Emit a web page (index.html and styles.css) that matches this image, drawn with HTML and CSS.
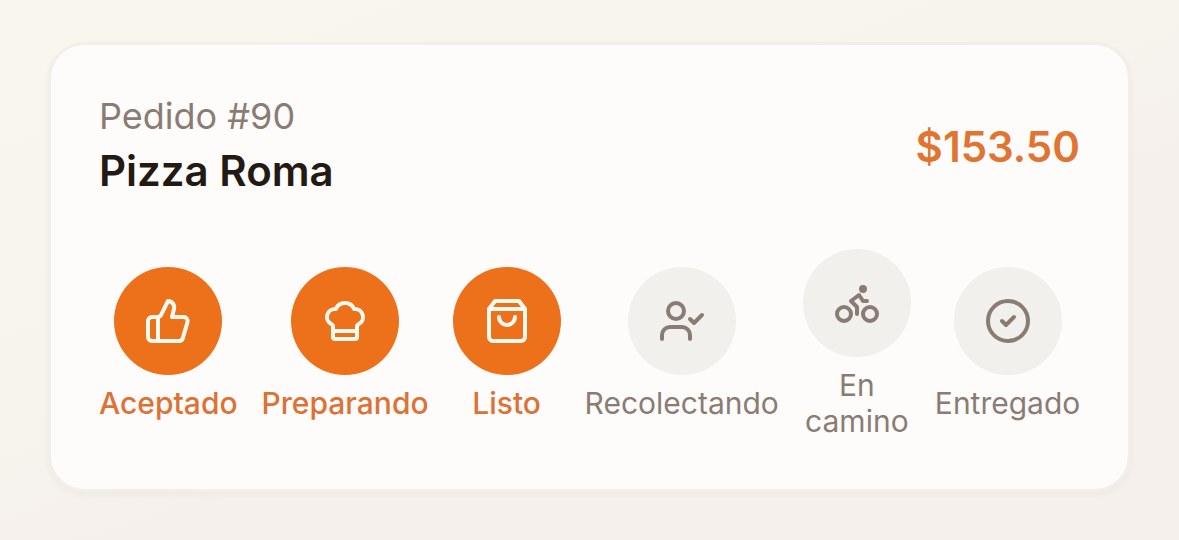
FILE: index.html
```html
<!DOCTYPE html>
<html lang="es">
<head>
<meta charset="utf-8">
<meta name="viewport" content="width=device-width, initial-scale=1">
<title>Pedido #90</title>
<link rel="stylesheet" href="styles.css">
</head>
<body>
<main class="page">
  <article class="card">
    <header class="card-header">
      <div>
        <p class="order-number">Pedido #90</p>
        <h1 class="store-name">Pizza Roma</h1>
      </div>
      <p class="total">$153.50</p>
    </header>
    <ol class="steps">
      <li class="step step-done">
        <span class="step-icon"><svg class="icon" viewBox="0 0 24 24" aria-hidden="true"><path d="M7 10v12"/><path d="M15 5.88 14 10h5.83a2 2 0 0 1 1.92 2.56l-2.33 8A2 2 0 0 1 17.5 22H4a2 2 0 0 1-2-2v-8a2 2 0 0 1 2-2h2.76a2 2 0 0 0 1.79-1.11L12 2a3.13 3.13 0 0 1 3 3.88Z"/></svg></span>
        <span class="step-label">Aceptado</span>
      </li>
      <li class="step step-done">
        <span class="step-icon"><svg class="icon" viewBox="0 0 24 24" aria-hidden="true"><path d="M17 21a1 1 0 0 0 1-1v-5.35c0-.457.316-.844.727-1.041a4 4 0 0 0-2.134-7.589 5 5 0 0 0-9.186 0 4 4 0 0 0-2.134 7.588c.411.198.727.585.727 1.041V20a1 1 0 0 0 1 1Z"/><path d="M6 17h12"/></svg></span>
        <span class="step-label">Preparando</span>
      </li>
      <li class="step step-done">
        <span class="step-icon"><svg class="icon" viewBox="0 0 24 24" aria-hidden="true"><path d="M6 2 3 6v14a2 2 0 0 0 2 2h14a2 2 0 0 0 2-2V6l-3-4Z"/><path d="M3 6h18"/><path d="M16 10a4 4 0 0 1-8 0"/></svg></span>
        <span class="step-label">Listo</span>
      </li>
      <li class="step">
        <span class="step-icon"><svg class="icon" viewBox="0 0 24 24" aria-hidden="true"><path d="M16 21v-2a4 4 0 0 0-4-4H6a4 4 0 0 0-4 4v2"/><circle cx="9" cy="7" r="4"/><path d="m16 11 2 2 4-4"/></svg></span>
        <span class="step-label">Recolectando</span>
      </li>
      <li class="step">
        <span class="step-icon"><svg class="icon" viewBox="0 0 24 24" aria-hidden="true"><circle cx="18.5" cy="17.5" r="3.5"/><circle cx="5.5" cy="17.5" r="3.5"/><circle cx="15" cy="5" r="1"/><path d="M12 17.5V14l-3-3 4-3 2 3h2"/></svg></span>
        <span class="step-label">En camino</span>
      </li>
      <li class="step">
        <span class="step-icon"><svg class="icon" viewBox="0 0 24 24" aria-hidden="true"><circle cx="12" cy="12" r="10"/><path d="m9 12 2 2 4-4"/></svg></span>
        <span class="step-label">Entregado</span>
      </li>
    </ol>
  </article>
</main>
</body>
</html>
```
FILE: styles.css
```css
* {
  box-sizing: border-box;
}

body {
  margin: 0;
  min-height: 100vh;
  background: linear-gradient(160deg, #f9f6ee 0%, #f7f4ed 40%, #f5f0ec 60%, #f5f0ec 100%);
  color: #231a13;
  font-family: Inter, "Liberation Sans", sans-serif;
}

.page {
  padding: 42px 48px;
}

.card {
  padding: 48px;
  border: 3px solid #f3eeea;
  border-radius: 36px;
  background: #fefcfa;
  background-clip: padding-box;
  box-shadow: 0 3px 6px rgba(60, 45, 30, 0.04);
}

.card-header {
  display: flex;
  align-items: center;
  justify-content: space-between;
  margin-bottom: 48px;
}

.order-number,
.store-name,
.total {
  margin: 0;
}

.order-number {
  margin-bottom: 2px;
  color: #8a7c75;
  font-size: 36px;
  line-height: 46px;
}

.store-name {
  font-size: 42px;
  font-weight: 600;
  line-height: 60px;
}

.total {
  color: #e17430;
  font-size: 42px;
  font-weight: 600;
  line-height: 60px;
}

.steps {
  display: flex;
  align-items: center;
  justify-content: space-between;
  gap: 24px;
  margin: 0;
  padding: 0;
  list-style: none;
}

.step {
  display: flex;
  flex-direction: column;
  align-items: center;
  gap: 10px;
  padding-bottom: 2px;
  color: #8a7c75;
  text-align: center;
}

.step-icon {
  display: grid;
  place-items: center;
  width: 108px;
  height: 108px;
  border-radius: 50%;
  background: #f1f0ed;
}

.step-label {
  font-size: 30px;
  line-height: 36px;
}

.step-done {
  color: #dc7235;
  font-weight: 500;
}

.step-done .step-icon {
  background: #ed701b;
  color: #fffaf0;
}

.icon {
  width: 48px;
  height: 48px;
  fill: none;
  stroke: currentColor;
  stroke-width: 2;
  stroke-linecap: round;
  stroke-linejoin: round;
}
```
